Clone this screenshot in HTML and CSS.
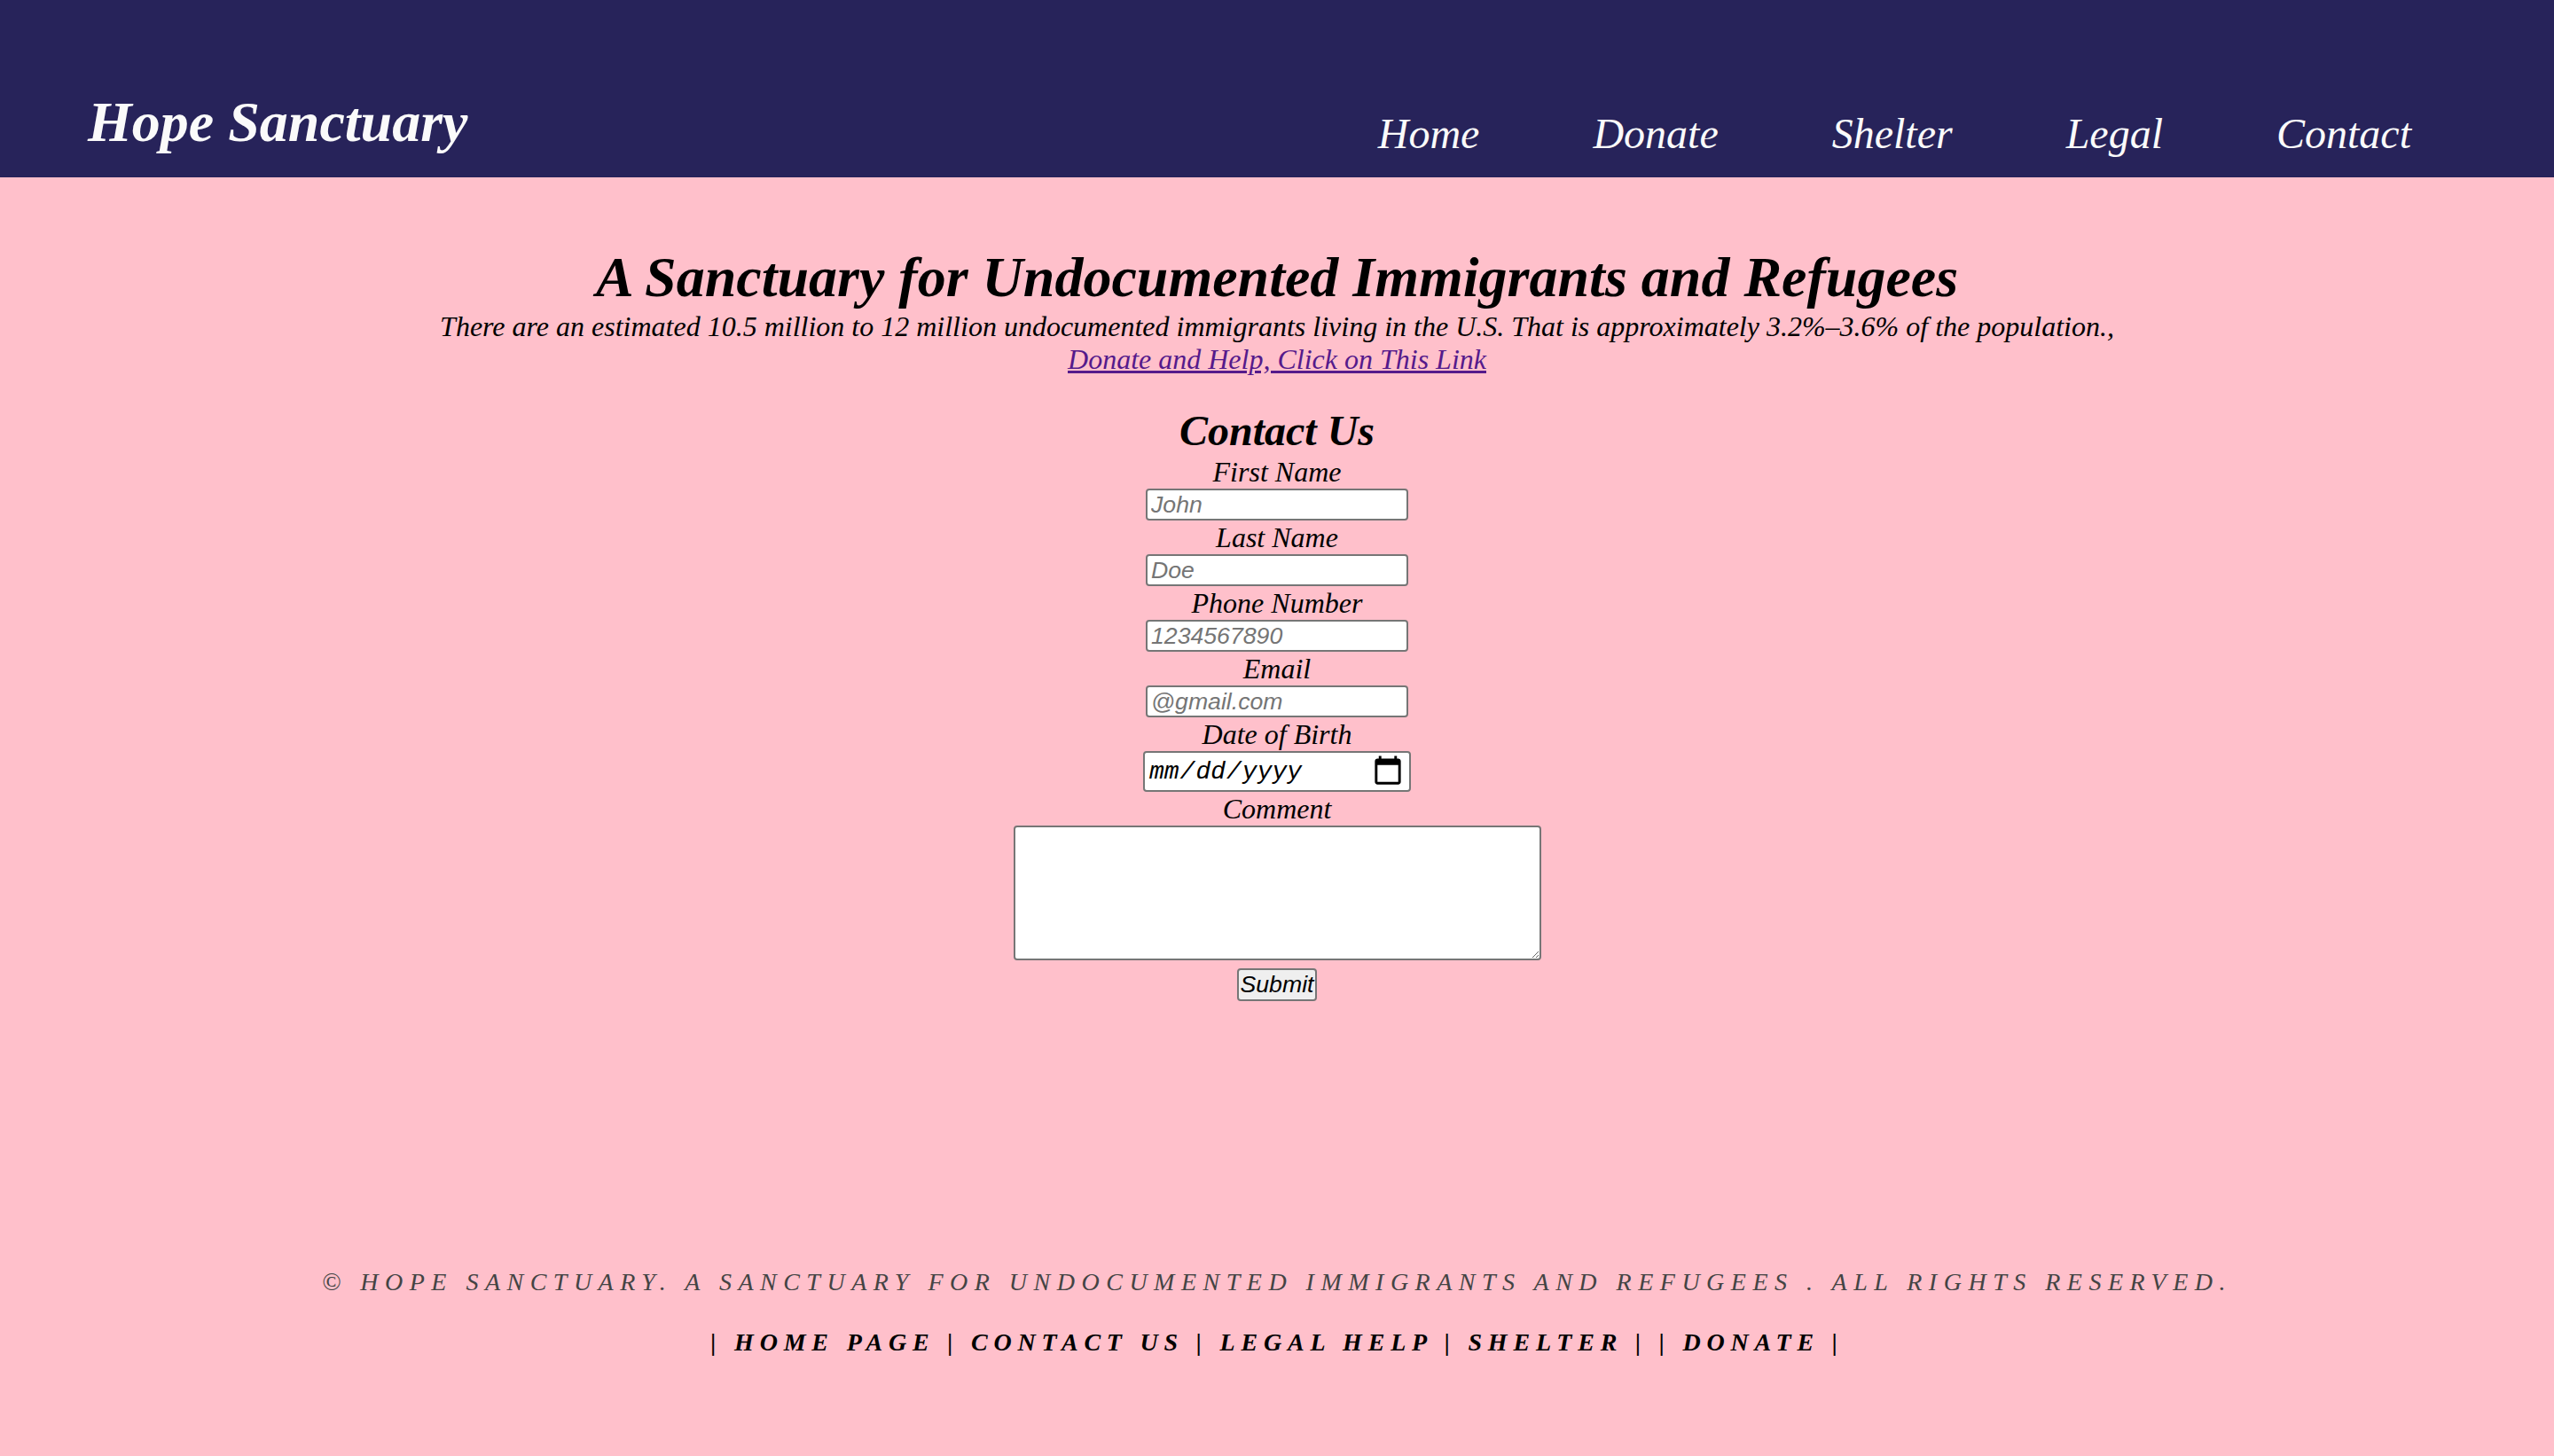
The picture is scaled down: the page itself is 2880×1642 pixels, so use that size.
FILE: index.html
```html
<!DOCTYPE html>
<html lang="en">
<head>
<meta charset="utf-8">
<title>Hope Sanctuary - Contact</title>
<link rel="stylesheet" href="styles.css">
</head>
<body>
<header class="site-header">
  <div class="logo">Hope Sanctuary</div>
  <nav class="main-nav">
    <a href="#">Home</a>
    <a href="#">Donate</a>
    <a href="#">Shelter</a>
    <a href="#">Legal</a>
    <a href="#">Contact</a>
  </nav>
</header>
<main class="content">
  <h1 class="page-title">A Sanctuary for Undocumented Immigrants and Refugees</h1>
  <p class="intro">There are an estimated 10.5 million to 12 million undocumented immigrants living in the U.S. That is approximately 3.2%–3.6% of the population.,<br><a class="intro-link" href="#">Donate and Help, Click on This Link</a></p>
  <h2 class="form-title">Contact Us</h2>
  <form class="contact-form">
    <label class="field-label" for="fn">First Name</label>
    <input class="text-input" id="fn" type="text" placeholder="John">
    <label class="field-label" for="ln">Last Name</label>
    <input class="text-input" id="ln" type="text" placeholder="Doe">
    <label class="field-label" for="ph">Phone Number</label>
    <input class="text-input" id="ph" type="text" placeholder="1234567890">
    <label class="field-label" for="em">Email</label>
    <input class="text-input" id="em" type="text" placeholder="@gmail.com">
    <label class="field-label" for="dob">Date of Birth</label>
    <input class="date-input" id="dob" type="date">
    <label class="field-label" for="cm">Comment</label>
    <textarea class="comment-input" id="cm"></textarea>
    <button class="submit-btn" type="button">Submit</button>
  </form>
</main>
<footer class="site-footer">
  <p class="copyright">© Hope Sanctuary. A Sanctuary for Undocumented Immigrants and Refugees . All Rights Reserved.</p>
  <p class="footer-links">| <a href="#">Home Page</a> | <a href="#">Contact Us</a> | <a href="#">Legal Help</a> | <a href="#">Shelter</a> | | <a href="#">Donate</a> |</p>
</footer>
</body>
</html>
```
FILE: styles.css
```css
html, body {
  margin: 0;
  padding: 0;
}
body {
  background: #ffc0cb;
  font-family: "Liberation Serif", "Times New Roman", serif;
  font-style: italic;
  font-size: 32px;
  color: #000;
  min-height: 1642px;
}
.site-header {
  height: 200px;
  background: #27235a;
  display: flex;
  justify-content: space-between;
  align-items: flex-start;
  padding-left: 99px;
  box-sizing: border-box;
}
.logo {
  margin-top: 101px;
  font-size: 64px;
  font-weight: bold;
  color: #fafafa;
  line-height: normal;
}
.main-nav {
  margin-top: 123px;
  margin-right: 161px;
  display: flex;
  gap: 128px;
}
.main-nav a {
  color: #fafafa;
  text-decoration: none;
  font-size: 48px;
  line-height: normal;
}
.content {
  text-align: center;
}
.page-title {
  margin: 76px 0 0;
  font-size: 64px;
  font-weight: bold;
  line-height: normal;
}
.intro {
  margin: 0;
  line-height: normal;
}
.intro-link {
  color: #551a8b;
}
.form-title {
  margin: 34px 0 0;
  font-size: 48px;
  font-weight: bold;
  line-height: normal;
}
.contact-form {
  display: flex;
  flex-direction: column;
  align-items: center;
}
.field-label {
  display: block;
  height: 38px;
  line-height: 38px;
}
.text-input {
  box-sizing: border-box;
  width: 296px;
  height: 36px;
  margin: 0;
  padding: 2px 4px;
  border: 2px solid #767676;
  border-radius: 4px;
  background: #fff;
  font-family: "Liberation Sans", Arial, sans-serif;
  font-style: italic;
  font-size: 26.67px;
}
.text-input::placeholder {
  color: #757575;
}
.date-input {
  box-sizing: border-box;
  width: 302px;
  height: 46px;
  margin: 0;
  padding: 2px 4px;
  border: 2px solid #767676;
  border-radius: 4px;
  background: #fff;
  font-family: "Liberation Mono", "Courier New", monospace;
  font-style: italic;
  font-size: 28px;
  color: #000;
}
.date-input::-webkit-datetime-edit {
  font-style: italic;
}
.date-input::-webkit-calendar-picker-indicator {
  padding: 0;
  margin: 0 6px 0 0;
  transform: scale(1.35);
}
.comment-input {
  box-sizing: border-box;
  width: 595px;
  height: 152px;
  margin: 0;
  border: 2px solid #767676;
  border-radius: 4px;
  background: #fff;
  resize: both;
}
.submit-btn {
  box-sizing: border-box;
  margin-top: 9px;
  width: 90px;
  height: 37px;
  padding: 0;
  border: 2px solid #767676;
  border-radius: 4px;
  background: #efefef;
  font-family: "Liberation Sans", Arial, sans-serif;
  font-style: italic;
  font-size: 26.67px;
  color: #000;
}
.site-footer {
  margin-top: 301px;
  text-align: center;
  text-transform: uppercase;
  font-size: 28px;
}
.copyright {
  margin: 0;
  color: #444;
  letter-spacing: 7.5px;
  line-height: normal;
}
.footer-links {
  margin: 36px 0 0;
  font-weight: bold;
  letter-spacing: 6.8px;
  line-height: normal;
}
.footer-links a {
  color: #000;
  text-decoration: none;
}
```
